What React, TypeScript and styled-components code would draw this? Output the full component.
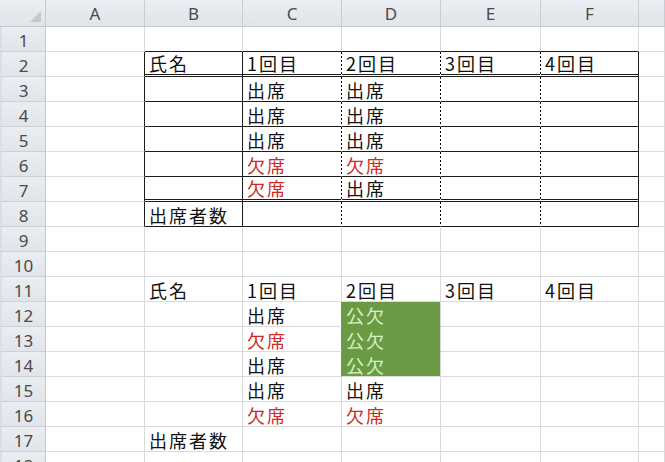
import React from "react";
import styled, { createGlobalStyle, css } from "styled-components";

const GlobalStyle = createGlobalStyle`
  html, body { margin: 0; padding: 0; background: #ffffff; overflow: hidden; }
  body { font-family: "Noto Sans CJK JP", "Noto Sans", sans-serif; }
  #root { width: 665px; height: 462px; }
`;

type Line = "grid" | "solid" | "dotted" | "double" | "fill";
type Tone = "normal" | "red" | "good";

const GRID = "#d9dadc";
const INK = "#1c1c1c";
const FILL = "#6a9a43";

const lineStyle = (l: Line) => {
  switch (l) {
    case "solid":
      return `1px solid ${INK}`;
    case "dotted":
      return `1px solid transparent`;
    case "double":
      return `3px double ${INK}`;
    case "fill":
      return `1px solid ${FILL}`;
    default:
      return `1px solid ${GRID}`;
  }
};

const Sheet = styled.div`
  display: grid;
  grid-template-columns: 46px 99px 98px 99px 99px 100px 98px 1fr;
  grid-template-rows: 27px repeat(18, 25px);
  width: 665px;
  height: 462px;
  overflow: hidden;
  background: #ffffff;
`;

const HeaderBase = css`
  box-sizing: border-box;
  background: linear-gradient(#eaedf1, #e1e5ea);
  color: #4a4a4a;
  font-family: "Noto Sans", "Liberation Sans", sans-serif;
  font-size: 17px;
  display: flex;
  align-items: center;
  justify-content: center;
`;

const Corner = styled.div`
  ${HeaderBase};
  border-right: 1px solid #c3c8cf;
  border-bottom: 1px solid #c3c8cf;
  justify-content: flex-end;
  align-items: flex-end;
  padding: 0 4px 4px 0;
`;

const ColHead = styled.div`
  ${HeaderBase};
  border-right: 1px solid #c9cdd3;
  border-bottom: 1px solid #c3c8cf;
  padding-top: 1px;
`;

const RowHead = styled.div`
  ${HeaderBase};
  border-left: 2px solid #d6e0ec;
  border-right: 1px solid #c3c8cf;
  border-bottom: 1px solid #cdd1d6;
  padding-top: 2px;
`;

const Cell = styled.div<{ $r: Line; $b: Line; $fill: boolean; $tone: Tone }>`
  box-sizing: border-box;
  min-width: 0;
  display: flex;
  align-items: flex-end;
  padding: 0 0 0 4px;
  white-space: nowrap;
  font-family: "Noto Sans CJK JP", sans-serif;
  font-size: 18px;
  line-height: 22px;
  letter-spacing: 2px;
  border-right: ${(p) => lineStyle(p.$r)};
  border-bottom: ${(p) => lineStyle(p.$b)};
  background-color: ${(p) => (p.$fill ? FILL : "transparent")};
  ${(p) =>
    p.$r === "dotted" &&
    css`
      background-image: linear-gradient(to bottom, #000000 50%, transparent 50%);
      background-size: 1px 4px;
      background-repeat: repeat-y;
      background-origin: border-box;
      background-position: right top;
    `}
  color: ${(p) =>
    p.$tone === "red" ? "#cf2a1f" : p.$tone === "good" ? "#d3f0c3" : "#111111"};
`;

const COLS = ["A", "B", "C", "D", "E", "F", ""];

type CellData = { t: string; tone?: Tone; fill?: boolean };

const data: Record<number, Record<number, CellData>> = {
  2: {
    2: { t: "氏名" },
    3: { t: "1回目" },
    4: { t: "2回目" },
    5: { t: "3回目" },
    6: { t: "4回目" },
  },
  3: { 3: { t: "出席" }, 4: { t: "出席" } },
  4: { 3: { t: "出席" }, 4: { t: "出席" } },
  5: { 3: { t: "出席" }, 4: { t: "出席" } },
  6: { 3: { t: "欠席", tone: "red" }, 4: { t: "欠席", tone: "red" } },
  7: { 3: { t: "欠席", tone: "red" }, 4: { t: "出席" } },
  8: { 2: { t: "出席者数" } },
  11: {
    2: { t: "氏名" },
    3: { t: "1回目" },
    4: { t: "2回目" },
    5: { t: "3回目" },
    6: { t: "4回目" },
  },
  12: { 3: { t: "出席" }, 4: { t: "公欠", tone: "good", fill: true } },
  13: { 3: { t: "欠席", tone: "red" }, 4: { t: "公欠", tone: "good", fill: true } },
  14: { 3: { t: "出席" }, 4: { t: "公欠", tone: "good", fill: true } },
  15: { 3: { t: "出席" }, 4: { t: "出席" } },
  16: { 3: { t: "欠席", tone: "red" }, 4: { t: "欠席", tone: "red" } },
  17: { 2: { t: "出席者数" } },
};

const inTable = (r: number) => r >= 2 && r <= 8;
const isFilled = (r: number, c: number) => c === 4 && r >= 12 && r <= 14;

const rightLine = (r: number, c: number): Line => {
  if (isFilled(r, c)) return "grid";
  if (c === 3 && r >= 12 && r <= 14) return "fill";
  if (!inTable(r)) return "grid";
  if (c === 1 || c === 2 || c === 6) return "solid";
  if (c >= 3 && c <= 5) return "dotted";
  return "grid";
};

const bottomLine = (r: number, c: number): Line => {
  if (isFilled(r, c)) return r === 14 ? "grid" : "fill";
  if (c >= 2 && c <= 6) {
    if (r === 1) return "solid";
    if (r === 2 || r === 7) return "double";
    if (r >= 3 && r <= 8) return "solid";
  }
  return "grid";
};

export default function App() {
  const rows = Array.from({ length: 18 }, (_, i) => i + 1);
  return (
    <>
      <GlobalStyle />
      <Sheet>
        <Corner>
          <svg width="11" height="11" viewBox="0 0 11 11">
            <polygon points="11,0 11,11 0,11" fill="#c4c8cd" />
          </svg>
        </Corner>
        {COLS.map((c, i) => (
          <ColHead key={`h${i}`}>{c}</ColHead>
        ))}
        {rows.map((r) => (
          <React.Fragment key={r}>
            <RowHead>{r}</RowHead>
            {COLS.map((_, ci) => {
              const c = ci + 1;
              const d = data[r]?.[c];
              return (
                <Cell
                  key={c}
                  $r={rightLine(r, c)}
                  $b={bottomLine(r, c)}
                  $fill={isFilled(r, c)}
                  $tone={d?.tone ?? "normal"}
                >
                  {d?.t ?? ""}
                </Cell>
              );
            })}
          </React.Fragment>
        ))}
      </Sheet>
    </>
  );
}
